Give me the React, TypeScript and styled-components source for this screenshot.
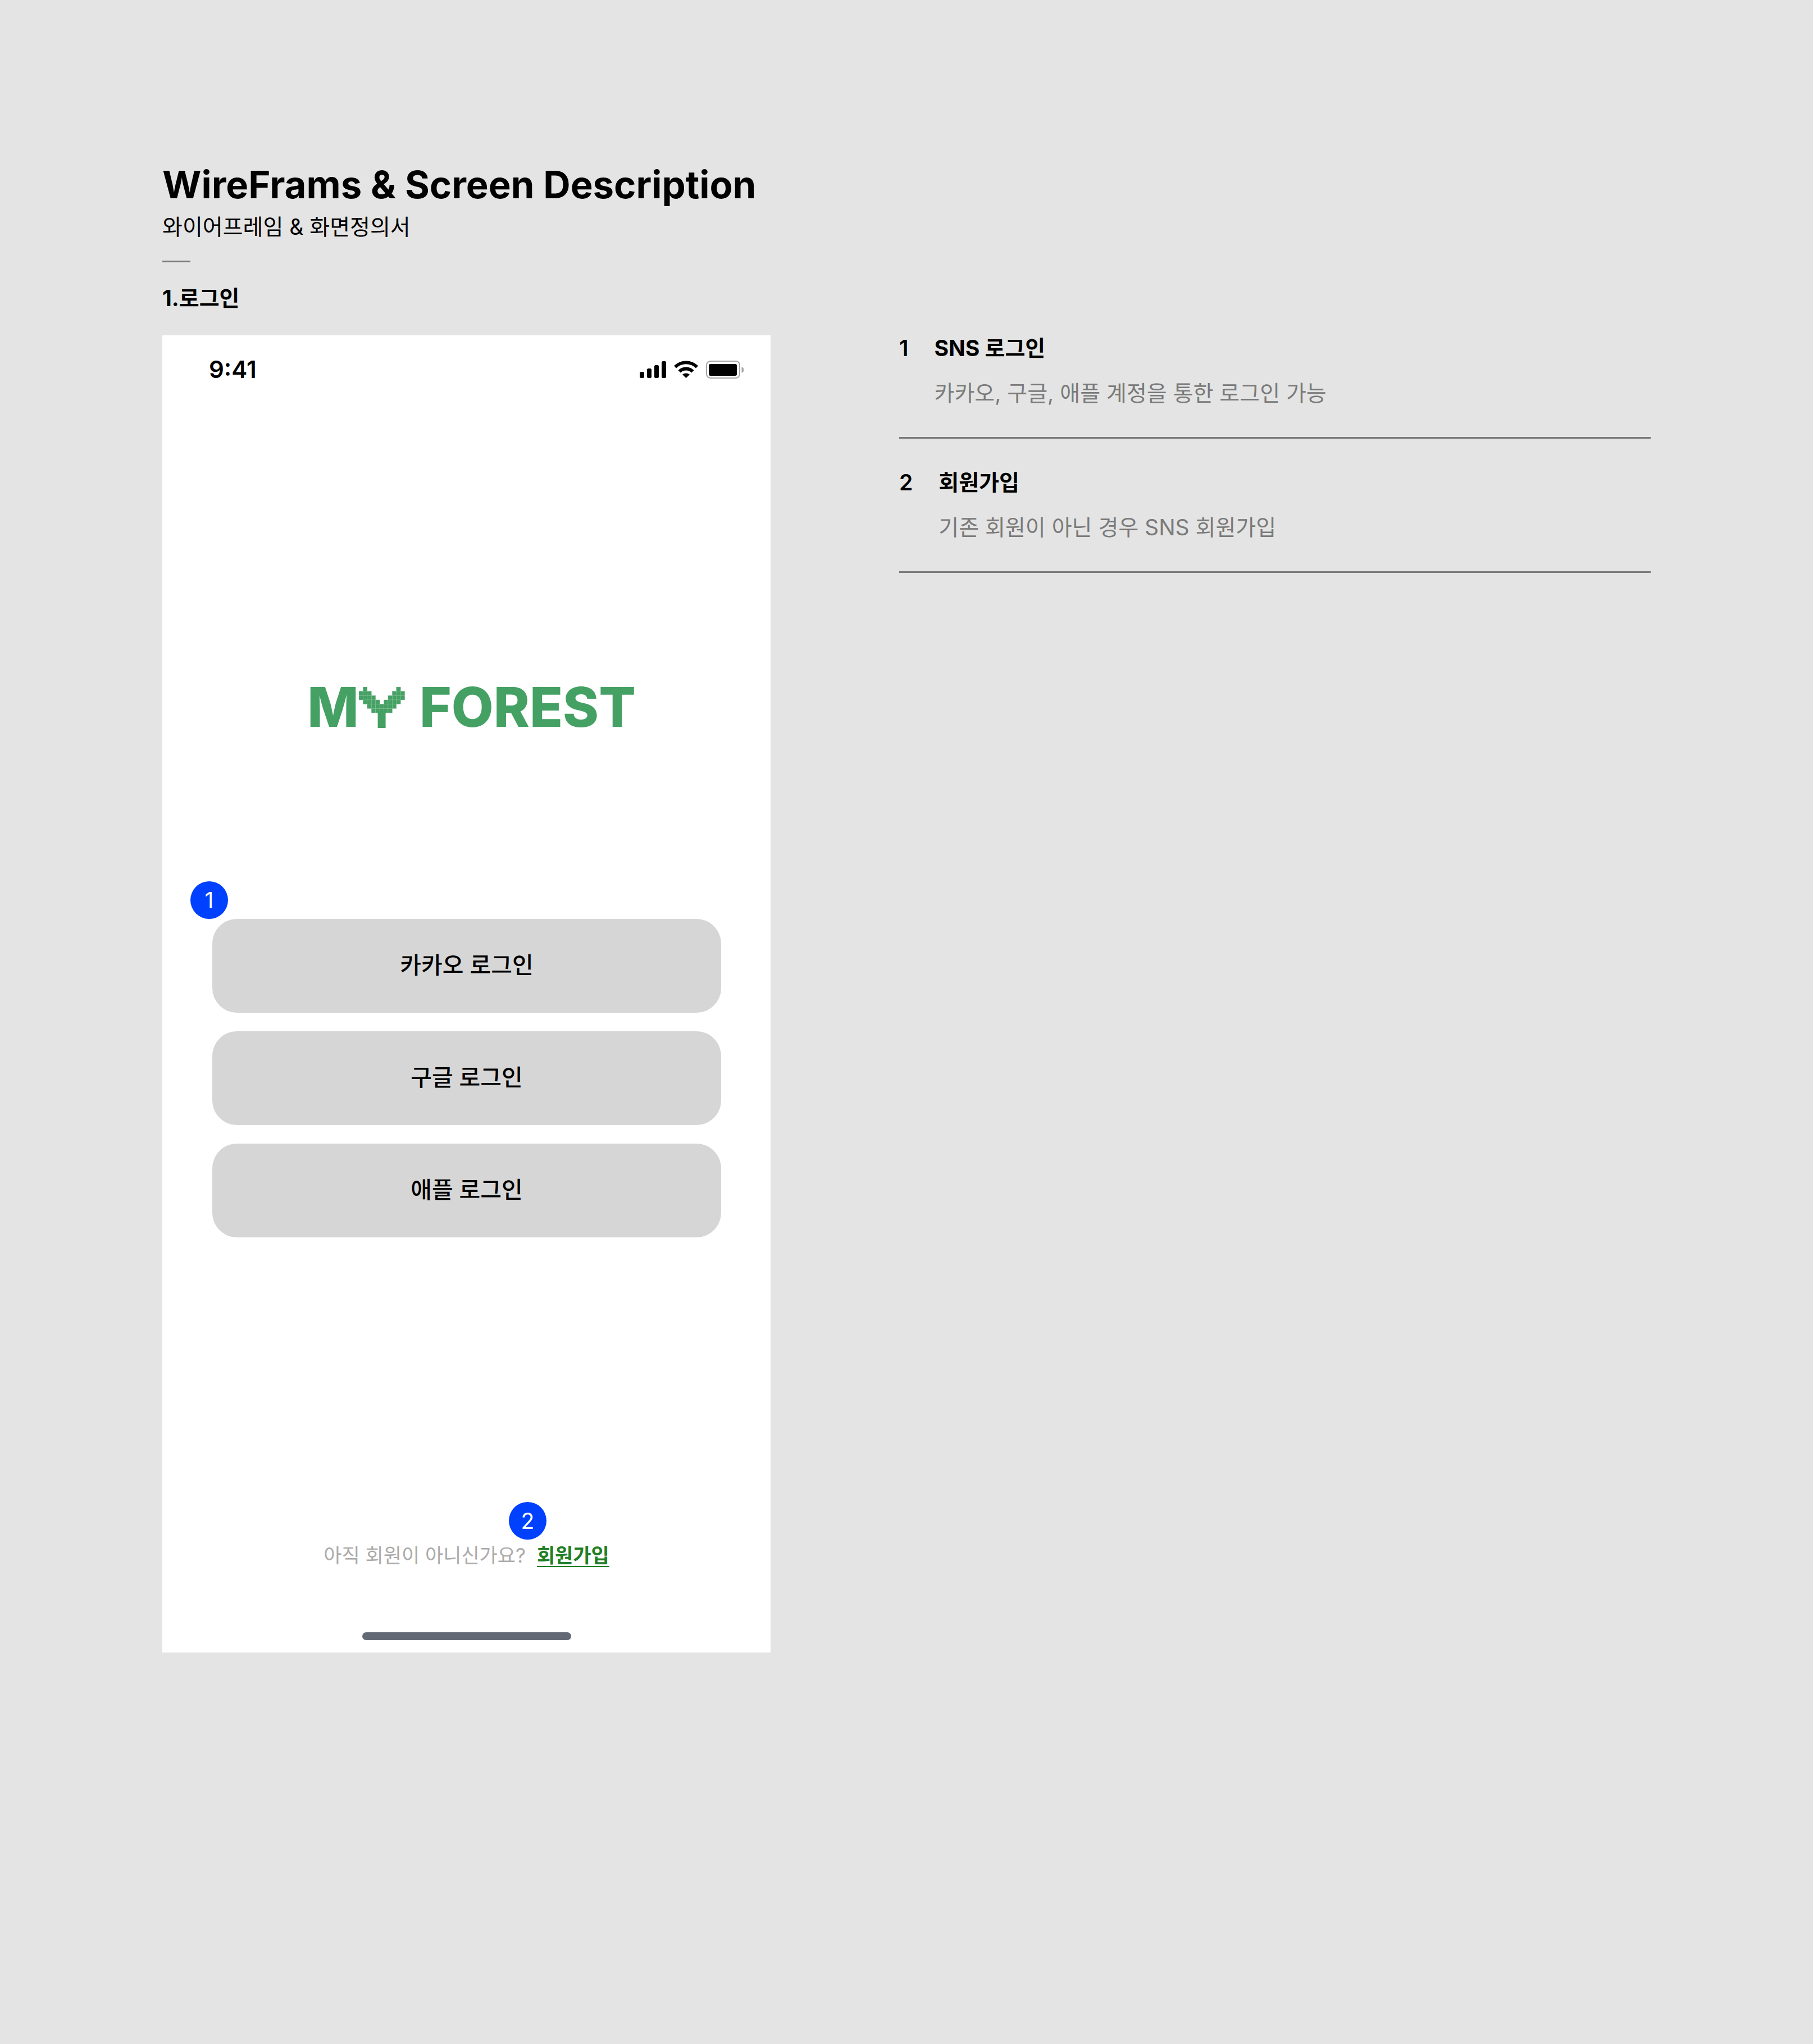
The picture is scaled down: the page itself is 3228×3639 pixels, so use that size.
import React from 'react';
import styled, { createGlobalStyle } from 'styled-components';

const GlobalStyle = createGlobalStyle`
  *, *::before, *::after { box-sizing: border-box; }
  body {
    margin: 0;
    background: #e4e4e4;
    color: #000;
    font-family: Inter, "Noto Sans CJK KR", sans-serif;
    font-size: 39px;
    line-height: 56px;
  }
  h1, h2, h3, p, ol, dl, dd { margin: 0; padding: 0; }
`;

const Page = styled.main`
  min-height: 100vh;
  padding: 288px 289px;
`;

const Title = styled.h1`
  font-size: 67px;
  font-weight: 700;
  line-height: 82px;
`;

const Subtitle = styled.p`
  margin-top: 6px;
`;

const ShortRule = styled.hr`
  width: 50px;
  height: 3px;
  margin: 32px 0 36px;
  border: 0;
  background: #7a7a7a;
`;

const SectionTitle = styled.h2`
  font-size: 39px;
  font-weight: 700;
  line-height: 56px;
`;

const Columns = styled.div`
  display: grid;
  grid-template-columns: minmax(0, 1083fr) minmax(0, 1338fr);
  column-gap: 229px;
  align-items: start;
  margin-top: 38px;
`;

const Phone = styled.section`
  display: flex;
  flex-direction: column;
  background: #fff;
  padding-bottom: 22px;
`;

const StatusBar = styled.div`
  display: flex;
  align-items: center;
  justify-content: space-between;
  padding: 36px 48px 0 83px;
`;

const Clock = styled.span`
  font-size: 42px;
  font-weight: 600;
  line-height: 50px;
`;

const StatusIcons = styled.svg`
  display: block;
  width: 185px;
  height: 32px;
`;

const Logo = styled.div`
  display: flex;
  align-items: center;
  justify-content: center;
  margin-top: 516px;
  padding-left: 18px;
  color: #45a163;
  font-size: 97px;
  font-weight: 800;
  line-height: 120px;
  white-space: pre;
`;

const Sprout = styled.svg`
  display: block;
  width: 82px;
  height: 73px;
  margin-right: 5px;
`;

const Badge = styled.span`
  position: absolute;
  display: grid;
  place-items: center;
  width: 67px;
  height: 67px;
  border-radius: 50%;
  background: #0040ff;
  color: #fff;
  font-size: 39px;
  line-height: 48px;
`;

const ListBadge = styled(Badge)`
  bottom: 100%;
  left: -39px;
`;

const LinkBadge = styled(Badge)`
  bottom: 100%;
  left: -50px;
`;

const LoginList = styled.div`
  position: relative;
  display: grid;
  gap: 33px;
  margin: 317px 88px 0 89px;
`;

const LoginButton = styled.button`
  height: 167px;
  padding: 0 0 4px;
  border: 0;
  border-radius: 44px;
  background: #d6d6d6;
  color: #000;
  font: inherit;
  font-size: 41px;
  font-weight: 500;
`;

const SignUp = styled.p`
  display: flex;
  justify-content: center;
  gap: 20px;
  margin-top: 538px;
  color: #aaa;
  font-size: 35px;
`;

const SignUpLinkBox = styled.span`
  position: relative;
`;

const SignUpLink = styled.a`
  color: #1f8026;
  font-weight: 700;
  text-decoration: underline;
  text-decoration-thickness: 2px;
  text-decoration-skip-ink: none;
  text-underline-offset: 6px;
`;

const HomeIndicator = styled.div`
  width: 372px;
  height: 14px;
  margin: 109px auto 0;
  border-radius: 7px;
  background: #636975;
`;

const Notes = styled.ol`
  list-style: none;
`;

const Note = styled.li`
  display: flex;
  gap: 46px;
  padding: 55px 0 50px;
  border-bottom: 3px solid #7a7a7a;

  &:first-child { padding-top: 0; }
`;

const NoteNumber = styled.span`
  font-weight: 600;
  line-height: 46px;
`;

const NoteTitle = styled.h3`
  font-size: 39px;
  font-weight: 700;
  line-height: 46px;
`;

const NoteText = styled.p`
  margin-top: 29px;
  color: #7a7a7a;
`;

const CELLS: Array<[number, number[]]> = [
  [0, [1, 9]],
  [1, [0, 1, 2, 8, 9, 10]],
  [2, [0, 1, 2, 3, 7, 8, 9, 10]],
  [3, [1, 2, 3, 4, 6, 7, 8, 9]],
  [4, [2, 3, 4, 5, 6, 7, 8]],
  [5, [3, 4, 5, 6, 7]],
];

const LOGINS = ['카카오 로그인', '구글 로그인', '애플 로그인'];

const NOTES = [
  { title: 'SNS 로그인', text: '카카오, 구글, 애플 계정을 통한 로그인 가능' },
  { title: '회원가입', text: '기존 회원이 아닌 경우 SNS 회원가입' },
];

function SproutMark() {
  return (
    <Sprout viewBox="0 0 82 73" fill="currentColor" aria-hidden="true">
      <g stroke="#7fbe95" strokeWidth="0.5">
        {CELLS.map(([row, cols]) =>
          cols.map((col) => (
            <rect key={`${row}-${col}`} x={col * 7.42} y={row * 7.67} width="7.42" height="7.67" />
          )),
        )}
      </g>
      <rect x="33.6" y="43" width="14" height="30" />
    </Sprout>
  );
}

function DeviceStatus() {
  return (
    <StatusIcons viewBox="0 0 185 32" role="img" aria-label="Signal, Wi-Fi, battery">
      <rect x="0" y="20" width="8" height="11" rx="2.5" />
      <rect x="13" y="14" width="8" height="17" rx="2.5" />
      <rect x="26" y="8" width="8" height="23" rx="2.5" />
      <rect x="39" y="1" width="8" height="30" rx="2.5" />
      <path d="M61 9.200a31 31 0 0 1 43 0l-4 4.200a25 25 0 0 0-35 0z" />
      <path d="M68.500 17.200a20 20 0 0 1 28 0l-4.200 4.200a14 14 0 0 0-19.600 0z" />
      <path d="M76 24.800a10.500 10.500 0 0 1 13 0L82.500 31z" />
      <rect x="119" y="1" width="59" height="30" rx="7" fill="none" stroke="#a6a6a6" strokeWidth="2" />
      <rect x="123" y="6" width="50" height="21" rx="3" />
      <path d="M181.500 11v11c2.600-1.200 4-3.200 4-5.500s-1.400-4.300-4-5.500z" fill="#a6a6a6" />
    </StatusIcons>
  );
}

export default function App() {
  return (
    <Page>
      <GlobalStyle />
      <header>
        <Title>WireFrams &amp; Screen Description</Title>
        <Subtitle>와이어프레임 &amp; 화면정의서</Subtitle>
        <ShortRule />
      </header>
      <SectionTitle>1.로그인</SectionTitle>
      <Columns>
        <Phone>
          <StatusBar>
            <Clock>9:41</Clock>
            <DeviceStatus />
          </StatusBar>
          <Logo>
            <span>M</span>
            <SproutMark />
            <span> FOREST</span>
          </Logo>
          <LoginList>
            <ListBadge>1</ListBadge>
            {LOGINS.map((label) => (
              <LoginButton key={label} type="button">{label}</LoginButton>
            ))}
          </LoginList>
          <SignUp>
            <span>아직 회원이 아니신가요?</span>
            <SignUpLinkBox>
              <LinkBadge>2</LinkBadge>
              <SignUpLink href="#signup">회원가입</SignUpLink>
            </SignUpLinkBox>
          </SignUp>
          <HomeIndicator />
        </Phone>
        <Notes>
          {NOTES.map((note, index) => (
            <Note key={note.title}>
              <NoteNumber>{index + 1}</NoteNumber>
              <div>
                <NoteTitle>{note.title}</NoteTitle>
                <NoteText>{note.text}</NoteText>
              </div>
            </Note>
          ))}
        </Notes>
      </Columns>
    </Page>
  );
}
